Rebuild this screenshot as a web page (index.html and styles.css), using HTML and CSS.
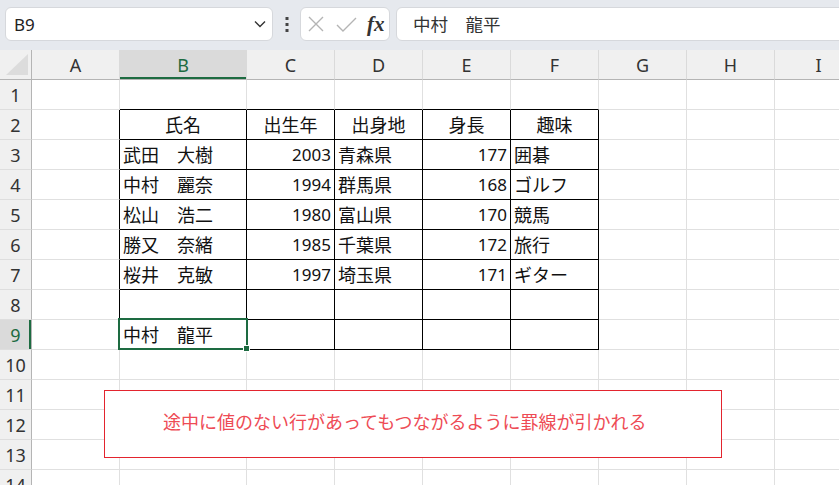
FILE: index.html
```html
<!DOCTYPE html>
<html lang="ja">

<head>
    <meta charset="UTF-8">
    <meta name="viewport" content="width=device-width, initial-scale=1.0">
    <title>罫線</title>
    <link rel="stylesheet" href="styles.css">
</head>

<body>
    <div class="toolbar">
        <div class="namebox">
            <span>B9</span>
            <svg class="chevron" width="12" height="8" viewBox="0 0 12 8">
                <path d="M1 1.5 L6 6.5 L11 1.5" fill="none" stroke="#333" stroke-width="1.4" />
            </svg>
        </div>
        <div class="more">
            <svg width="4" height="15" viewBox="0 0 4 15">
                <rect x="0.5" y="0" width="3" height="3" fill="#444" />
                <rect x="0.5" y="6" width="3" height="3" fill="#444" />
                <rect x="0.5" y="12" width="3" height="3" fill="#444" />
            </svg>
        </div>
        <div class="fxbox">
            <svg width="16" height="16" viewBox="0 0 16 16">
                <path d="M1 1 L15 15 M15 1 L1 15" stroke="#b4b4b4" stroke-width="1.4" fill="none" />
            </svg>
            <svg width="21" height="15" viewBox="0 0 21 15">
                <path d="M1 8 L7 14 L20 1" stroke="#b4b4b4" stroke-width="1.4" fill="none" />
            </svg>
            <span class="fx">fx</span>
        </div>
        <div class="formula">中村　龍平</div>
    </div>

    <div class="sheet">
        <table class="grid">
            <colgroup>
                <col style="width:32px">
                <col style="width:88px">
                <col style="width:127px">
                <col style="width:88px">
                <col style="width:88px">
                <col style="width:88px">
                <col style="width:88px">
                <col style="width:88px">
                <col style="width:88px">
                <col style="width:88px">
            </colgroup>
            <thead>
                <tr>
                    <th class="corner">
                        <svg width="31" height="29" viewBox="0 0 31 29">
                            <polygon points="6,25 28,4 28,25" fill="#dcdcdc" />
                        </svg>
                    </th>
                    <th>A</th>
                    <th class="cur">B</th>
                    <th>C</th>
                    <th>D</th>
                    <th>E</th>
                    <th>F</th>
                    <th>G</th>
                    <th>H</th>
                    <th>I</th>
                </tr>
            </thead>
            <tbody>
                <tr>
                    <th class="rh">1</th>
                    <td></td>
                    <td class="u"></td><td class="u"></td><td class="u"></td><td class="u"></td><td class="u"></td>
                    <td></td><td></td><td></td>
                </tr>
                <tr>
                    <th class="rh">2</th>
                    <td class="l"></td>
                    <td class="t c">氏名</td>
                    <td class="t c">出生年</td>
                    <td class="t c">出身地</td>
                    <td class="t c">身長</td>
                    <td class="t c">趣味</td>
                    <td></td><td></td><td></td>
                </tr>
                <tr>
                    <th class="rh">3</th>
                    <td class="l"></td>
                    <td class="t">武田　大樹</td>
                    <td class="t r">2003</td>
                    <td class="t">青森県</td>
                    <td class="t r">177</td>
                    <td class="t">囲碁</td>
                    <td></td><td></td><td></td>
                </tr>
                <tr>
                    <th class="rh">4</th>
                    <td class="l"></td>
                    <td class="t">中村　麗奈</td>
                    <td class="t r">1994</td>
                    <td class="t">群馬県</td>
                    <td class="t r">168</td>
                    <td class="t">ゴルフ</td>
                    <td></td><td></td><td></td>
                </tr>
                <tr>
                    <th class="rh">5</th>
                    <td class="l"></td>
                    <td class="t">松山　浩二</td>
                    <td class="t r">1980</td>
                    <td class="t">富山県</td>
                    <td class="t r">170</td>
                    <td class="t">競馬</td>
                    <td></td><td></td><td></td>
                </tr>
                <tr>
                    <th class="rh">6</th>
                    <td class="l"></td>
                    <td class="t">勝又　奈緒</td>
                    <td class="t r">1985</td>
                    <td class="t">千葉県</td>
                    <td class="t r">172</td>
                    <td class="t">旅行</td>
                    <td></td><td></td><td></td>
                </tr>
                <tr>
                    <th class="rh">7</th>
                    <td class="l"></td>
                    <td class="t">桜井　克敏</td>
                    <td class="t r">1997</td>
                    <td class="t">埼玉県</td>
                    <td class="t r">171</td>
                    <td class="t">ギター</td>
                    <td></td><td></td><td></td>
                </tr>
                <tr>
                    <th class="rh">8</th>
                    <td class="l"></td>
                    <td class="t"></td><td class="t"></td><td class="t"></td><td class="t"></td><td class="t"></td>
                    <td></td><td></td><td></td>
                </tr>
                <tr>
                    <th class="rh cur">9</th>
                    <td class="l"></td>
                    <td class="t sel">中村　龍平</td>
                    <td class="t"></td><td class="t"></td><td class="t"></td><td class="t"></td>
                    <td></td><td></td><td></td>
                </tr>
                <tr>
                    <th class="rh">10</th>
                    <td></td><td></td><td></td><td></td><td></td><td></td><td></td><td></td><td></td>
                </tr>
                <tr>
                    <th class="rh">11</th>
                    <td></td><td></td><td></td><td></td><td></td><td></td><td></td><td></td><td></td>
                </tr>
                <tr>
                    <th class="rh">12</th>
                    <td></td><td></td><td></td><td></td><td></td><td></td><td></td><td></td><td></td>
                </tr>
                <tr>
                    <th class="rh">13</th>
                    <td></td><td></td><td></td><td></td><td></td><td></td><td></td><td></td><td></td>
                </tr>
                <tr>
                    <th class="rh">14</th>
                    <td></td><td></td><td></td><td></td><td></td><td></td><td></td><td></td><td></td>
                </tr>
            </tbody>
        </table>

        <!-- text box floating over the sheet -->
        <div class="note">途中に値のない行があってもつながるように罫線が引かれる</div>
    </div>
</body>

</html>
```

FILE: styles.css
```css
body {
    margin: 0;
    width: 839px;
    height: 485px;
    overflow: hidden;
    background-color: #ffffff;
    font-family: "Noto Sans", "Noto Sans CJK JP", sans-serif;
    color: #111;
}

/* Top bar: name box and formula bar */
.toolbar {
    display: flex;
    align-items: flex-start;
    height: 50px;
    box-sizing: border-box;
    padding: 7px 0 0 5px;
    background-color: #e6e9ee;
}

.namebox {
    display: flex;
    align-items: center;
    justify-content: space-between;
    width: 268px;
    height: 34px;
    box-sizing: border-box;
    padding: 0 6px 0 8px;
    background: #ffffff;
    border: 1px solid #d6d8dc;
    border-radius: 6px;
    font-size: 17px;
    color: #222;
}

.more {
    width: 27px;
    height: 34px;
    display: flex;
    justify-content: center;
    align-items: center;
}

.fxbox {
    display: flex;
    align-items: center;
    gap: 12px;
    width: 90px;
    height: 34px;
    box-sizing: border-box;
    padding: 0 0 0 7px;
    background: #ffffff;
    border: 1px solid #d6d8dc;
    border-radius: 6px;
}

.fx {
    font-family: "Liberation Serif", serif;
    font-style: italic;
    font-weight: bold;
    font-size: 21px;
    color: #333;
    margin-left: -2px;
}

.formula {
    flex: 1;
    height: 34px;
    margin-left: 6px;
    margin-right: -10px;
    box-sizing: border-box;
    padding-left: 16px;
    line-height: 32px;
    background: #ffffff;
    border: 1px solid #d6d8dc;
    border-radius: 6px;
    font-size: 17.5px;
    color: #333;
}

/* Sheet grid */
.sheet {
    position: relative;
    height: 435px;
    overflow: hidden;
}

.grid {
    border-collapse: separate;
    border-spacing: 0;
    table-layout: fixed;
    width: 863px;
}

.grid tr {
    height: 30px;
}

.grid th {
    padding: 0;
    font-weight: normal;
    font-size: 18px;
    line-height: 20px;
    color: #333;
    background-color: #f0f0f0;
    border-right: 1px solid #dadada;
    border-bottom: 1px solid #b4b4b4;
}

.grid th.corner {
    border-right-color: #b4b4b4;
    line-height: 0;
}

.grid th.cur {
    background-color: #dadada;
    color: #1d6b41;
    box-shadow: inset 0 -2px 0 #1d6b41;
}

.grid th.rh {
    border-right: 1px solid #b4b4b4;
    border-bottom: 1px solid #dedede;
}

.grid th.rh.cur {
    box-shadow: inset -2px 0 0 #1d6b41;
}

.grid td {
    padding: 0 3px;
    font-size: 18px;
    line-height: 20px;
    white-space: nowrap;
    overflow: hidden;
    border-right: 1px solid #e0e0e0;
    border-bottom: 1px solid #e0e0e0;
}

.grid td.t {
    border-right-color: #000;
    border-bottom-color: #000;
}

.grid td.l {
    border-right-color: #000;
}

.grid td.u {
    border-bottom-color: #000;
}

.grid td.c {
    text-align: center;
}

.grid td.r {
    text-align: right;
    font-size: 17px;
}

/* active cell B9 */
.grid td.sel {
    position: relative;
    overflow: visible;
}

.grid td.sel::before {
    content: "";
    position: absolute;
    top: -2px;
    left: -2px;
    right: -2px;
    bottom: -1px;
    border: 2px solid #1d6b41;
}

.grid td.sel::after {
    content: "";
    position: absolute;
    right: -4px;
    bottom: -3px;
    width: 5px;
    height: 5px;
    background: #1d6b41;
    border: 1px solid #ffffff;
}

.note {
    position: absolute;
    left: 104px;
    top: 340px;
    width: 618px;
    height: 68px;
    box-sizing: border-box;
    display: flex;
    align-items: center;
    padding: 0 0 6px 58px;
    background: #ffffff;
    border: 1px solid #e3242e;
    font-family: "Noto Sans CJK JP", sans-serif;
    font-size: 18px;
    color: #ee4b55;
}
```
